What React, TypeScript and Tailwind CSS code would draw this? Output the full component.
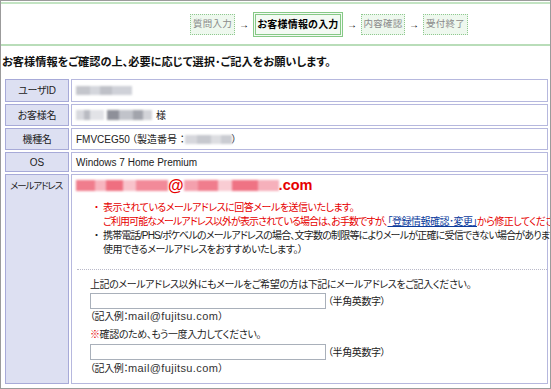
import React from "react";

type Seg = { w: number; c: string };

function Blob({ segs, h = 9 }: { segs: Seg[]; h?: number }) {
  return (
    <span className="inline-flex items-center align-middle blur-[0.8px]" style={{ height: h }}>
      {segs.map((s, i) => (
        <span key={i} className="inline-block h-full" style={{ width: s.w, background: s.c }} />
      ))}
    </span>
  );
}

function Step({ label, w }: { label: string; w: string }) {
  return (
    <div className={`${w} h-[21px] flex items-center justify-center border border-dotted border-[#8fc98f] bg-[#eef8ee] text-[9.5px] text-[#8a8a8a] tracking-[0.2px]`}>
      {label}
    </div>
  );
}

function Arrow() {
  return <div className="w-[18px] flex justify-center text-[10px] text-black">→</div>;
}

function Example() {
  return (
    <div className="h-[14px] flex items-center">
      <span>（記入例：</span>
      <span className="text-[11px] tracking-[0.4px] text-[#333]">mail@fujitsu.com</span>
      <span>）</span>
    </div>
  );
}

const font = "font-['Liberation_Sans','Noto_Sans_CJK_JP',sans-serif] [font-feature-settings:'palt']";

export default function App() {
  return (
    <div className={`w-[551px] h-[389px] border border-[#9b9b9b] bg-white overflow-hidden ${font} text-[#222]`}>
      <div className="mt-[1px] h-[2px] bg-[#c3e4c3]" />
      <div className="h-[40px] flex items-center pl-[189px]">
        <Step label="質問入力" w="w-[45px]" />
        <Arrow />
        <div className="h-[25px] w-[90px] flex items-center justify-center border-[3px] border-double border-[#86c986] bg-[#f3faf3] text-[10px] font-bold text-black tracking-[0.2px]">
          お客様情報の入力
        </div>
        <Arrow />
        <Step label="内容確認" w="w-[44px]" />
        <Arrow />
        <Step label="受付終了" w="w-[45px]" />
      </div>
      <div className="h-[2px] bg-[#b9ddb9]" />
      <div className="h-[33px] pl-[1px] pt-[8px] text-[11.2px] leading-[16px] font-bold text-[#111] whitespace-nowrap">
        お客様情報をご確認の上、必要に応じて選択･ご記入をお願いします。
      </div>

      <div className="ml-[4px] w-[543px] flex flex-col gap-[2px] text-[10px] leading-[13px]">
        <div className="flex gap-[2px] h-[23px]">
          <div className="w-[64px] shrink-0 flex items-center justify-center bg-[#dde0f2] border border-[#a7aad8] tracking-[-0.3px]">ユーザID</div>
          <div className="flex-1 flex items-center pl-[4px] bg-white border border-[#b6b8de]">
            <Blob segs={[{ w: 14, c: "#c4c6cc" }, { w: 10, c: "#d4d6dc" }, { w: 12, c: "#bfc1c8" }, { w: 20, c: "#cfd1d8" }]} />
          </div>
        </div>
        <div className="flex gap-[2px] h-[22px]">
          <div className="w-[64px] shrink-0 flex items-center justify-center bg-[#dde0f2] border border-[#a7aad8] tracking-[-0.3px]">お客様名</div>
          <div className="flex-1 flex items-center pl-[4px] bg-white border border-[#b6b8de]">
            <Blob h={10} segs={[{ w: 8, c: "#d8d9de" }, { w: 6, c: "#b9bbc2" }, { w: 14, c: "#e2e3e7" }]} />
            <span className="w-[3px]" />
            <Blob h={10} segs={[{ w: 12, c: "#8e9099" }, { w: 14, c: "#c1c3ca" }, { w: 10, c: "#a2a4ac" }, { w: 9, c: "#d2d3d8" }]} />
            <span className="ml-[4px]">様</span>
          </div>
        </div>
        <div className="flex gap-[2px] h-[22px]">
          <div className="w-[64px] shrink-0 flex items-center justify-center bg-[#dde0f2] border border-[#a7aad8] tracking-[-0.3px]">機種名</div>
          <div className="flex-1 flex items-center pl-[4px] bg-white border border-[#b6b8de] whitespace-nowrap">
            <span>FMVCEG50</span>
            <span className="ml-[2px]">（製造番号 ：</span>
            <Blob segs={[{ w: 12, c: "#d6d7dc" }, { w: 14, c: "#c6c8ce" }, { w: 10, c: "#dcdde1" }, { w: 11, c: "#caccd2" }]} />
            <span>）</span>
          </div>
        </div>
        <div className="flex gap-[2px] h-[20px]">
          <div className="w-[64px] shrink-0 flex items-center justify-center bg-[#dde0f2] border border-[#a7aad8]">OS</div>
          <div className="flex-1 flex items-center pl-[4px] bg-white border border-[#b6b8de]">Windows 7 Home Premium</div>
        </div>
        <div className="flex gap-[2px] h-[210px]">
          <div className="w-[64px] shrink-0 pl-[4px] pt-[4px] bg-[#dde0f2] border border-[#a7aad8] whitespace-nowrap text-[9.5px] tracking-[-1.1px]">メールアドレス</div>
          <div className="flex-1 min-w-0 bg-white border border-[#b6b8de] whitespace-nowrap">
            <div className="h-[19px] pl-[4px] pt-[2px] flex items-center text-[#e60000]">
              <Blob h={11} segs={[{ w: 19, c: "#f07d8d" }, { w: 11, c: "#f7b5bf" }, { w: 17, c: "#ef6f80" }, { w: 13, c: "#f8c3cb" }, { w: 32, c: "#f28a99" }]} />
              <span className="text-[16px] leading-[16px] font-bold">@</span>
              <Blob h={11} segs={[{ w: 14, c: "#f4a0ad" }, { w: 20, c: "#f07d8d" }, { w: 14, c: "#f9ccd3" }, { w: 26, c: "#ef7384" }, { w: 21, c: "#f6b0bb" }]} />
              <span className="text-[14.5px] leading-[15px] font-bold">.com</span>
            </div>
            <div className="pl-[22px] pt-[7px] tracking-[-0.5px]">
              <div className="flex text-[#e60000]">
                <span className="w-[9px] shrink-0">・</span>
                <div>
                  <div className="h-[13.5px]">表示されているメールアドレスに回答メールを送信いたします。</div>
                  <div className="h-[13.5px]">
                    <span className="tracking-[-0.9px]">ご利用可能なメールアドレス以外が表示されている場合は、お手数ですが、</span>
                    <span className="text-[#0b3a9c] underline">「登録情報確認･変更」</span>
                    から修正してください。
                  </div>
                </div>
              </div>
              <div className="flex mt-[1px]">
                <span className="w-[9px] shrink-0">・</span>
                <div>
                  <div className="h-[13.5px] tracking-[-0.8px]">携帯電話/PHS/ポケベルのメールアドレスの場合、文字数の制限等によりメールが正確に受信できない場合があります。</div>
                  <div className="h-[13.5px]">使用できるメールアドレスをおすすめいたします。）</div>
                </div>
              </div>
            </div>
            <div className="ml-[5px] mt-[13px] border-t border-dotted border-[#b9b9c9]" />
            <div className="pl-[18px] pt-[8px] tracking-[-0.4px]">
              <div className="h-[14px]">上記のメールアドレス以外にもメールをご希望の方は下記にメールアドレスをご記入ください。</div>
              <div className="flex items-center mt-[1px] h-[16px]">
                <div className="w-[236px] h-[16px] border border-[#a9b0ba] bg-white" />
                <span className="ml-[2px]">（半角英数字）</span>
              </div>
              <Example />
              <div className="h-[14px] mt-[5px]"><span className="text-[#e60000]">※</span>確認のため、もう一度入力してください。</div>
              <div className="flex items-center mt-[2px] h-[16px]">
                <div className="w-[236px] h-[16px] border border-[#a9b0ba] bg-white" />
                <span className="ml-[2px]">（半角英数字）</span>
              </div>
              <div className="mt-[1px]">
                <Example />
              </div>
            </div>
          </div>
        </div>
      </div>
    </div>
  );
}
